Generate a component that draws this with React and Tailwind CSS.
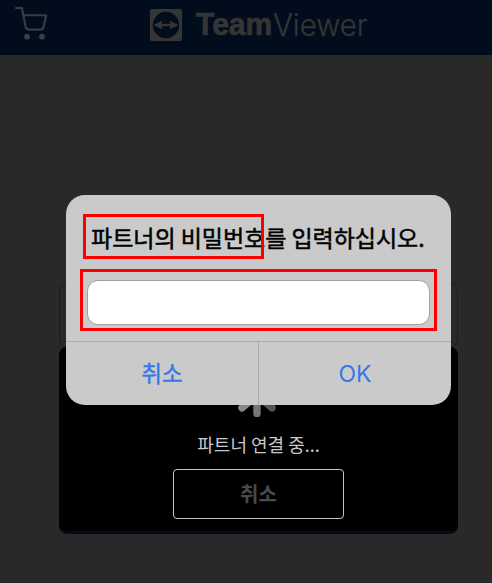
function CartIcon() {
  return (
    <svg className="h-9 w-9" viewBox="0 0 36 36" fill="none" stroke="#3b3d40" strokeWidth="2.1" strokeLinejoin="round" strokeLinecap="round">
      <path d="M2 4h6l3.6 18.6q.6 3 3.4 3h11.3q2.8 0 3.4-3L32.2 11.2H9.4" />
      <circle cx="13" cy="32.7" r="2.9" fill="#3b3d40" stroke="none" />
      <circle cx="28" cy="32.7" r="2.9" fill="#3b3d40" stroke="none" />
    </svg>
  );
}

function TeamViewerMark() {
  return (
    <svg className="h-8 w-8" viewBox="0 0 32 32">
      <rect width="32" height="32" rx="2" fill="#353535" />
      <circle cx="16" cy="16" r="13.2" fill="#010d1d" />
      <path d="M3.6 16 12.5 11.4 11.4 14.7h9.2L19.5 11.4 28.4 16 19.5 20.6l1.1-3.3h-9.2l1.1 3.3Z" fill="#353535" />
    </svg>
  );
}

function Header() {
  return (
    <header className="flex h-[55px] bg-[#010d1d]">
      <div className="w-[150px] pt-1 pl-[14px]">
        <CartIcon />
      </div>
      <div className="flex pt-[9px]">
        <TeamViewerMark />
        <div className="ml-[14px] flex text-[31px] leading-[32px] text-[#353535]">
          <span className="w-[77px] origin-left scale-x-[0.97] font-['Liberation_Sans',sans-serif] font-bold [-webkit-text-stroke:0.7px_#353535]">Team</span>
          <span className="origin-left scale-x-[0.95] font-['Inter',sans-serif] font-light [-webkit-text-stroke:0.25px_#353535]">Viewer</span>
        </div>
      </div>
    </header>
  );
}

function Spinner() {
  return (
    <svg className="-ml-1 h-12 w-12" viewBox="-24 -24 48 48" strokeWidth="7.4" strokeLinecap="round">
      <path d="M0 10V19.4" stroke="#777" />
      <path d="M7.8 7.8 15 13.9" stroke="#555" />
      <path d="M-7.8 7.8-15 13.9" stroke="#888" />
    </svg>
  );
}

function PasswordDialog() {
  return (
    <div className="absolute top-[195px] left-[66px] flex h-[210px] w-[385px] flex-col overflow-hidden rounded-[19px] bg-[#cacaca]">
      <div className="flex h-[147px] flex-col border-b border-[#adadad] px-[14px] pt-[19px]">
        <div className="relative ml-[3px] flex h-[45px] w-[181px] items-center border-[3px] border-[#fb0000] pl-[5px]">
          <h1 className="text-[23px] leading-[32px] font-normal tracking-[-0.03px] whitespace-nowrap text-black [-webkit-text-stroke:0.5px_#000]">파트너의 비밀번호를 입력하십시오.</h1>
          <span className="absolute -top-[3px] -right-[3px] h-[45px] w-[3px] bg-[#fb0000]" />
        </div>
        <div className="mt-[10px] h-[62px] w-[357px] border-[3px] border-[#fb0000] px-1 pt-[8px]">
          <input aria-label="비밀번호" className="block h-[45px] w-[343px] rounded-[11px] border border-[#a0a0a0] bg-white outline-none" />
        </div>
      </div>
      <div className="flex flex-1 text-[22.5px] text-[#3478ea]">
        <button className="w-[193px] border-r border-[#adadad] pb-[2px] [-webkit-text-stroke:0.4px_#3478ea]">취소</button>
        <button className="flex-1 pt-px font-['Inter','Liberation_Sans',sans-serif] text-[23px]">OK</button>
      </div>
    </div>
  );
}

export default function App() {
  return (
    <div className="relative h-[583px] w-[492px] overflow-hidden bg-[#292929] font-['Noto_Sans_CJK_KR',sans-serif]">
      <Header />
      <main className="px-[59px] pt-[228px]">
        <div className="h-[65px] w-[399px] rounded-lg border border-[#1c1c1c]" />
        <div className="-mt-px flex h-[187px] w-[399px] flex-col items-center rounded-lg border-b-[3px] border-[#010d1d] bg-black pt-[23px]">
          <Spinner />
          <p className="mt-[13px] text-[18px] leading-[26px] whitespace-nowrap text-[#c8c8c8]">파트너 연결 중...</p>
          <button className="mt-[12px] h-[50px] w-[171px] shrink-0 rounded-[4px] border border-[#c5c5c5] text-[20px] font-bold text-[#4a4a4a]">취소</button>
        </div>
      </main>
      <PasswordDialog />
    </div>
  );
}
